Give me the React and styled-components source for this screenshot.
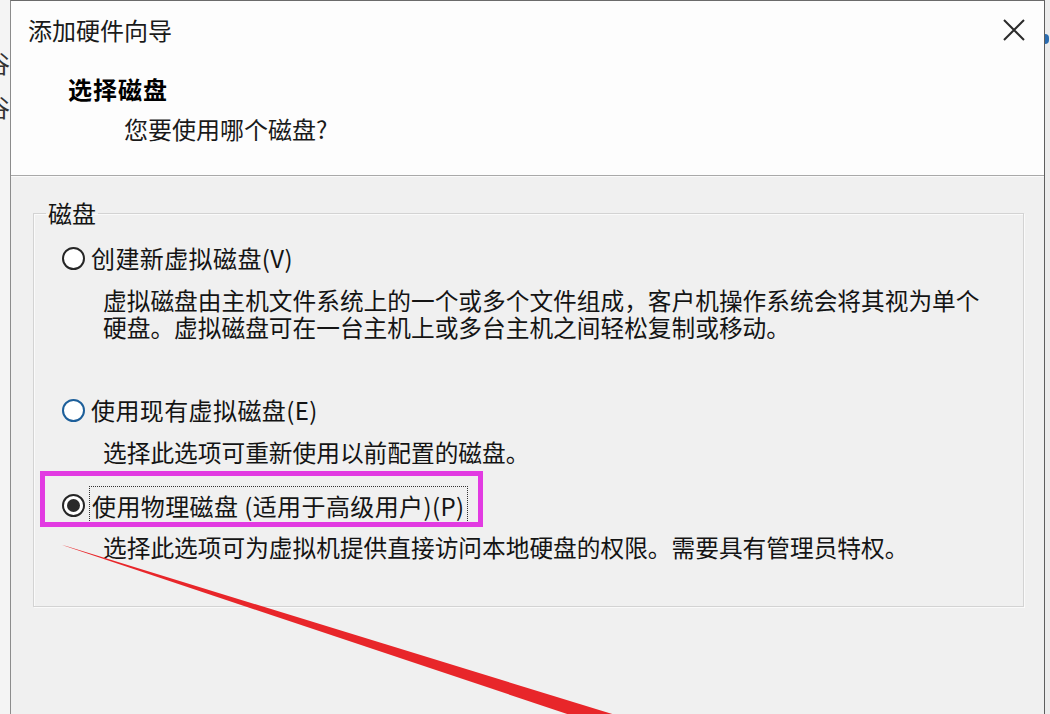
import React from 'react'
import styled, { createGlobalStyle } from 'styled-components'

const GlobalStyle = createGlobalStyle`
  html, body {
    margin: 0;
    padding: 0;
    background: #f0f0f0;
  }
  * {
    box-sizing: border-box;
  }
`

const FONT = `"Noto Sans CJK SC", "Noto Sans", "DejaVu Sans", sans-serif`

const options = [
  {
    id: 'new',
    label: '创建新虚拟磁盘(V)',
    state: 'idle',
    gap: 15,
    description:
      '虚拟磁盘由主机文件系统上的一个或多个文件组成，客户机操作系统会将其视为单个硬盘。虚拟磁盘可在一台主机上或多台主机之间轻松复制或移动。',
  },
  {
    id: 'existing',
    label: '使用现有虚拟磁盘(E)',
    state: 'hover',
    gap: 53,
    description: '选择此选项可重新使用以前配置的磁盘。',
  },
  {
    id: 'physical',
    label: '使用物理磁盘 (适用于高级用户)(P)',
    state: 'checked',
    gap: 23,
    focused: true,
    description: '选择此选项可为虚拟机提供直接访问本地硬盘的权限。需要具有管理员特权。',
  },
]

const App = () => (
  <>
    <GlobalStyle />
    <Page>
      <LeftStrip>
        <Peek>谷</Peek>
        <Peek>谷</Peek>
      </LeftStrip>
      <Window>
        <Header>
          <TitleBar>
            <Title>添加硬件向导</Title>
            <CloseButton aria-label="关闭">
              <svg width="22" height="22" viewBox="0 0 22 22">
                <path d="M1 1 L21 21 M21 1 L1 21" stroke="#2b2b2b" strokeWidth="2" fill="none" />
              </svg>
            </CloseButton>
          </TitleBar>
          <Heading>选择磁盘</Heading>
          <SubHeading>您要使用哪个磁盘?</SubHeading>
        </Header>
        <Body>
          <Group>
            <Legend>磁盘</Legend>
            {options.map(o => (
              <Option key={o.id} gap={o.gap}>
                <RadioRow>
                  {o.focused && <Highlight />}
                  <Radio state={o.state} />
                  <RadioLabel focused={o.focused}>{o.label}</RadioLabel>
                </RadioRow>
                <Description>{o.description}</Description>
              </Option>
            ))}
          </Group>
        </Body>
      </Window>
      <RightStrip>
        <Marker />
      </RightStrip>
      <Arrow viewBox="0 0 1050 714" width="1050" height="714">
        <polygon points="62,545 66,546 622,717 618,731" fill="#e8262a" />
      </Arrow>
    </Page>
  </>
)

export default App

const Page = styled.div`
  position: relative;
  display: flex;
  width: 1050px;
  height: 714px;
  overflow: hidden;
  font-family: ${FONT};
  color: #141414;
  background: #f0f0f0;
`

const LeftStrip = styled.div`
  flex: none;
  width: 10px;
  overflow: hidden;
  display: flex;
  flex-direction: column;
  align-items: flex-end;
  padding-top: 50px;
  gap: 18px;
  background: #f4f4f4;
`

const Peek = styled.span`
  flex: none;
  font-size: 24px;
  line-height: 26px;
  color: #333;
`

const Window = styled.div`
  flex: none;
  width: 1035px;
  display: flex;
  flex-direction: column;
  border-top: 1px solid #6b6b6b;
  border-left: 1px solid #8c8c8c;
  border-right: 1px solid #5e5e5e;
  background: #f0f0f0;
`

const RightStrip = styled.div`
  flex: none;
  width: 5px;
  padding-top: 34px;
  background: #ececec;
`

const Marker = styled.div`
  width: 4px;
  height: 10px;
  border-radius: 0 4px 4px 0;
  background: #2a6cb0;
`

const Header = styled.div`
  height: 175px;
  background: #fdfdfd;
  border-bottom: 1px solid #a9a9a9;
`

const TitleBar = styled.div`
  display: flex;
  align-items: center;
  justify-content: space-between;
  height: 58px;
  padding: 0 19px 0 17px;
`

const Title = styled.h1`
  margin: 0;
  font-size: 24px;
  font-weight: 400;
  line-height: 32px;
  color: #1a1a1a;
`

const CloseButton = styled.div`
  display: flex;
  width: 22px;
  height: 22px;
`

const Heading = styled.h2`
  margin: 14px 0 0;
  padding-left: 57px;
  font-size: 24px;
  font-weight: 700;
  line-height: 32px;
  letter-spacing: 1px;
  color: #000;
`

const SubHeading = styled.div`
  margin-top: 8px;
  padding-left: 113px;
  font-size: 24px;
  line-height: 32px;
  color: #1a1a1a;
`

const Body = styled.div`
  flex: 1;
  padding: 22px 20px 0 22px;
  border-top: 1px solid #fbfbfb;
`

const Group = styled.fieldset`
  margin: 0;
  padding: 0 0 45px;
  min-inline-size: 0;
  border: 1px solid #d3d3d3;
  box-shadow: inset 1px 1px 0 #fafafa, 1px 1px 0 #fafafa;
`

const Legend = styled.legend`
  margin-left: 12px;
  padding: 0 2px;
  font-size: 24px;
  line-height: 28px;
  color: #141414;
`

const Option = styled.div`
  margin-top: ${({ gap }) => gap}px;
`

const RadioRow = styled.div`
  position: relative;
  display: flex;
  align-items: center;
  height: 32px;
  padding-left: 28px;
`

const Highlight = styled.div`
  position: absolute;
  left: 6px;
  top: -18px;
  width: 443px;
  height: 56px;
  border: 5px solid #e23be2;
  pointer-events: none;
`

const Radio = styled.span`
  position: relative;
  flex: none;
  width: 23px;
  height: 23px;
  border-radius: 50%;
  background: #fff;
  border: 2px solid ${({ state }) => (state === 'hover' ? '#1d5f9a' : '#262626')};

  &::after {
    content: '';
    display: ${({ state }) => (state === 'checked' ? 'block' : 'none')};
    position: absolute;
    inset: 3px;
    border-radius: 50%;
    background: #2a2a2a;
  }
`

const RadioLabel = styled.span`
  margin-left: ${({ focused }) => (focused ? '4px' : '6px')};
  padding: ${({ focused }) => (focused ? '3px 2px 2px' : '0')};
  border: ${({ focused }) => (focused ? '1px dotted #333' : 'none')};
  font-size: 24px;
  line-height: 32px;
  letter-spacing: 0.4px;
  white-space: nowrap;
  color: #141414;
`

const Description = styled.p`
  margin: 13px 0 0;
  padding-left: 69px;
  max-width: 960px;
  font-size: 23.7px;
  line-height: 27px;
  color: #141414;
`

const Arrow = styled.svg`
  position: absolute;
  left: 0;
  top: 0;
  pointer-events: none;
`
